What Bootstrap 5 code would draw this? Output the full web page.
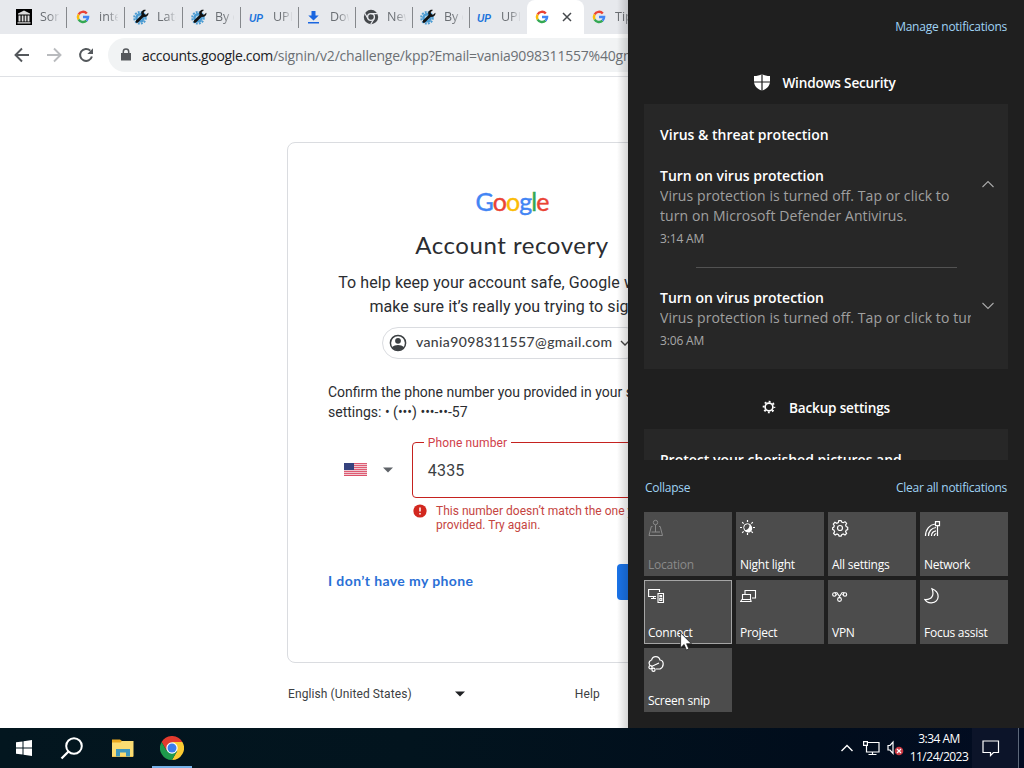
<!DOCTYPE html>
<html lang="en">
<head>
<meta charset="utf-8">
<meta name="viewport" content="width=device-width, initial-scale=1">
<title>Account recovery</title>
<link href="https://cdn.jsdelivr.net/npm/bootstrap@5.3.0/dist/css/bootstrap.min.css" rel="stylesheet">
<style>
body{width:1024px;height:768px;font-family:"Open Sans","Noto Sans",sans-serif;font-size:14px;color:#2b2d31;background:#fff}
svg{display:block;flex:none}
.desk{height:728px}
.browser{width:628px}
.page-w{width:1024px}
.edge-shade{top:0;right:0;bottom:0;width:11px;background:linear-gradient(90deg,rgba(0,0,0,0),rgba(0,0,0,.16))}
.tabstrip{height:34px;background:#e7e9ed;padding-left:9px}
.tab{width:57px;height:34px;padding-left:8px;gap:8px;font-size:12.5px;color:#6a6e73;border-right:1px solid #85888c;border-image:linear-gradient(transparent 8px,#85888c 8px,#85888c 27px,transparent 27px) 1}
.tab:nth-child(-n+5){width:58px}
.tab:first-child{padding-left:7px}
.tab:nth-child(n+6){padding-left:7px}
.tab span{width:19px;overflow:hidden;white-space:nowrap;-webkit-mask-image:linear-gradient(90deg,#000 45%,transparent 105%);mask-image:linear-gradient(90deg,#000 45%,transparent 105%)}
.tab.noline{border-color:transparent;border-image:none}
.tab.current{background:#fff;border-radius:8px 8px 0 0;border:0;gap:12px}
.toolbar{height:43px;border-bottom:1px solid #dfe1e5}
.omni{height:34px;margin-left:14px;border-radius:17px;background:#f1f3f4;padding-left:12px;font-size:14px;width:880px;color:#6c7074;letter-spacing:-.2px}
.omni b{font-weight:400;color:#202124;letter-spacing:-.34px}
.rb{font-family:Roboto,sans-serif}
.gs{font-family:Lato,sans-serif}
.signin{width:450px;height:521px;margin-top:65px;border:1px solid #dadce0;border-radius:8px;padding:43px 40px 0}
.logo{font-size:25px;line-height:30px;letter-spacing:-.95px;-webkit-text-stroke:.4px}
.logo span:nth-child(1),.logo span:nth-child(4){color:#4285f4;-webkit-text-stroke-color:#4285f4}
.logo span:nth-child(2),.logo span:nth-child(6){color:#ea4335;-webkit-text-stroke-color:#ea4335}
.logo span:nth-child(3){color:#fbbc05;-webkit-text-stroke-color:#fbbc05}
.logo span:nth-child(5){color:#34a853;-webkit-text-stroke-color:#34a853}
.headline{font-size:24px;line-height:32px;margin-top:13px;letter-spacing:.55px}
.lede{font-size:16px;line-height:24px;margin-top:10px;letter-spacing:.08px}
.chip{height:32px;width:260px;border:1px solid #dadce0;border-radius:16px;padding-left:6px;gap:9px;margin:8px 0 0 54px;font-weight:500;font-size:14px;letter-spacing:.37px;color:#3c4043}
.chip span{margin-top:-3px}
.chip span+svg{margin-left:-2px}
.confirm{font-size:14px;line-height:20px;margin-top:23px}
.country{width:84px;padding-left:16px;gap:16px;height:56px}
.phone{width:285px;height:56px;border:1px solid #c5221f;border-radius:4px;padding:1px 0 0 15px;font-size:16px;color:#3c4043;letter-spacing:.2px}
.phone label{top:-8px;left:11px;background:#fff;padding:0 4px;font-size:12px;line-height:16px;color:#d0404a;letter-spacing:.13px}
.err{font-size:12px;line-height:14px;color:#c5453f;margin:6px 0 0 85px;gap:9px;letter-spacing:.02px}
.act{margin-top:32px}
.act a{color:#2a6fd6;font-weight:700;font-size:14px;letter-spacing:.4px;margin-top:-4px}
.act .btn{width:79px;height:36px;background:#1a73e8;border-radius:4px}
.foot{width:450px;padding-left:1px;margin-top:22px;font-size:12px;line-height:18px;color:#3c4043;letter-spacing:.1px}
.panel{width:396px;background:#1f1f1f;color:#fff;padding:0 16px;font-size:12px}
.panel a{color:#9fd3f5;letter-spacing:-.25px;position:relative}
.feed{height:460px;overflow:hidden}
.ttl{font-weight:600}
.hd{font-size:13.6px;line-height:20px;gap:12px;letter-spacing:-.2px}
.note{background:#272727;padding:21px 16px 0}
.t15{font-size:14px;line-height:20px;letter-spacing:0}
.dim{color:#a0a0a0;white-space:nowrap;overflow:hidden;width:311px;letter-spacing:.09px}
.stamp{font-size:12px;line-height:16px;color:#a8a8a8;margin-top:5px;letter-spacing:-.15px}
.rule{height:1px;background:#525252;margin:21px 35px 0 36px}
.tiles{display:grid;grid-template-columns:repeat(4,88px);grid-auto-rows:64px;gap:4px}
.tile{background:#4c4c4c;padding:6px 4px 2px;font-size:12px;line-height:18px;letter-spacing:-.25px;display:flex;flex-direction:column;justify-content:space-between;white-space:nowrap}
.tile.off{color:#8a8a8a}
.tile.hot{box-shadow:inset 0 0 0 1px #a5a5a5}
.pointer{left:680px;top:632px}
.taskbar{height:40px;background:linear-gradient(90deg,#03161f,#02141e 40%,#010d1c 80%,#020c22);color:#fff}
.running{width:40px;height:40px;border-bottom:2px solid #76b1e8;padding-top:2px}
.clock{font-size:12px;line-height:18px;width:60px;letter-spacing:-.5px;white-space:nowrap}
.center{width:46px;height:40px;background:#0c1429;margin-left:3px;padding-left:10px}
.peek{width:6px;height:40px;border-left:1px solid #5d6879}
</style>
</head>
<body class="overflow-hidden position-relative">
<svg width="0" height="0" class="position-absolute">
  <defs>
    <symbol id="g" viewBox="0 0 16 16"><g fill="none" stroke-width="2.500"><path d="M3.600 5.500A5.050 5.050 0 0 1 11.800 4.500" stroke="#ea4335"/><path d="M3.600 10.500a5.050 5.050 0 0 1 0-5" stroke="#fbbc05"/><path d="M11.500 11.600a5.050 5.050 0 0 1-7.900-1.100" stroke="#34a853"/><path d="M8 8h5.050a5.050 5.050 0 0 1-1.550 3.600" stroke="#4285f4"/></g></symbol>
    <symbol id="gear" viewBox="0 0 16 16"><circle cx="7" cy="8.800" r="4.800" fill="#4b9bd2"/><circle cx="7" cy="8.800" r="5.800" fill="none" stroke="#4b9bd2" stroke-width="2" stroke-dasharray="1.900 1.140"/><circle cx="7" cy="8.800" r="2.400" fill="#a8cfe8"/><path d="M4 12.600 10.300 6.300" stroke="#111" stroke-width="2.800" stroke-linecap="round"/><path d="M10 1.200c-2 1-2.400 3.500-1 5.300s4.200 1.900 5.700 0c.8-1 .9-2 .6-2.800l-2.300 2-2-.7-.2-2 2.200-2c-1-.4-2.100-.3-3 .2z" fill="#111"/></symbol>
    <symbol id="up" viewBox="0 0 16 16"><text x="0" y="12.500" font-family="Liberation Sans" font-weight="700" font-style="italic" font-size="11.500" textLength="14" lengthAdjust="spacingAndGlyphs" fill="#1b74dc">UP</text></symbol>
  </defs>
</svg>

<div class="desk d-flex">
  <main class="browser position-relative overflow-hidden">
    <div class="page-w">
      <div class="tabstrip d-flex">
        <div class="tab d-flex align-items-center"><svg width="16" height="16"><path fill="#000" d="M0 0h16v16H0z"/><path d="M2 4.500 8 1.500l6 3v1H2zM2.500 6.500h2v6h-2zM5.700 6.500h1.800v6H5.700zM8.600 6.500h1.800v6H8.600zM11.500 6.500h2v6h-2zM1.500 13.200h13v1.300h-13z" fill="#ddd"/></svg><span>Som</span></div>
        <div class="tab d-flex align-items-center"><svg width="16" height="16"><use href="#g"/></svg><span>inter</span></div>
        <div class="tab d-flex align-items-center"><svg width="16" height="16"><use href="#gear"/></svg><span>Late</span></div>
        <div class="tab d-flex align-items-center"><svg width="16" height="16"><use href="#gear"/></svg><span>By c</span></div>
        <div class="tab d-flex align-items-center"><svg width="16" height="16"><use href="#up"/></svg><span>UPL</span></div>
        <div class="tab d-flex align-items-center"><svg width="16" height="16"><path d="M5.500 2h4v4.500h3.200L7.500 11.500 2.300 6.500h3.200zM2 13h11v1.600H2z" fill="#1a66e0"/></svg><span>Dow</span></div>
        <div class="tab d-flex align-items-center"><svg width="16" height="16"><circle cx="8" cy="8" r="7.200" fill="#45484c"/><circle cx="8" cy="8" r="3.400" fill="#45484c" stroke="#e7e9ed" stroke-width="1.400"/><path d="M8 4.600h6.500M5 9.700 1.800 4.200M11 9.700l-3.200 5.400" stroke="#e7e9ed" stroke-width="1.200"/></svg><span>New</span></div>
        <div class="tab d-flex align-items-center"><svg width="16" height="16"><use href="#gear"/></svg><span>By c</span></div>
        <div class="tab noline d-flex align-items-center"><svg width="16" height="16"><use href="#up"/></svg><span>UPL</span></div>
        <div class="tab current d-flex align-items-center"><svg width="16" height="16"><use href="#g"/></svg><svg width="10" height="10" stroke="#45484c" stroke-width="1.500"><path d="m1 1 8 8M9 1 1 9"/></svg></div>
        <div class="tab noline d-flex align-items-center"><svg width="16" height="16"><use href="#g"/></svg><span>Tips</span></div>
      </div>
      <div class="toolbar d-flex align-items-center">
        <svg width="94" height="42" fill="none" stroke-width="1.900"><path d="M29 21H16M22 14.500 15.500 21l6.500 6.500" stroke="#54585c"/><path d="M47 21h13M54 14.500 60.500 21 54 27.500" stroke="#b9bbbe"/><path d="M90.300 16.600A6 6 0 1 0 91.900 22.500" stroke="#54585c" stroke-width="2"/><path d="M93 14.300v5.700h-5.700z" fill="#54585c"/></svg>
        <div class="omni d-flex align-items-center"><svg width="12" height="14" style="margin-right:10px"><path d="M1 5h10v7.500H1z" fill="#55585c"/><path d="M3.300 5.500V3.800a2.700 2.700 0 0 1 5.400 0v1.700" fill="none" stroke="#55585c" stroke-width="1.500"/></svg><div class="text-nowrap url"><b>accounts.google.com</b>/signin/v2/challenge/kpp?Email=vania9098311557%40gmail.com</div></div>
      </div>
      <section class="signin mx-auto">
        <div class="logo gs text-center"><span>G</span><span>o</span><span>o</span><span>g</span><span>l</span><span>e</span></div>
        <h1 class="headline gs text-center mb-0 fw-normal">Account recovery</h1>
        <p class="lede rb text-center mb-0">To help keep your account safe, Google wants to make sure it’s really you trying to sign in</p>
        <div class="chip gs d-flex align-items-center"><svg width="18" height="18"><circle cx="9" cy="9" r="7.600" fill="#fff" stroke="#3c4043" stroke-width="1.500"/><circle cx="9" cy="6.800" r="2.900" fill="#3c4043"/><path d="M3 13.300c3-3.200 9-3.200 12 0-2.600 4-9.400 4-12 0z" fill="#3c4043"/></svg><span>vania9098311557@gmail.com</span><svg width="10" height="8"><path d="m1 2 4 4 4-4" fill="none" stroke="#444" stroke-width="1.400"/></svg></div>
        <p class="confirm rb mb-0">Confirm the phone number you provided in your security settings: • (•••) •••-••-57</p>
        <div class="d-flex rb" style="margin-top:20px">
          <div class="country d-flex align-items-center"><svg width="23" height="13" style="margin-top:-1px"><path fill="#f2d6dc" d="M0 0h23v13H0z"/><path d="M0 .6h23M0 2.600h23M0 4.600h23M0 6.600h23M0 8.600h23M0 10.600h23M0 12.500h23" stroke="#dc5068" stroke-width="1"/><path fill="#35427e" d="M0 0h10v7H0z"/></svg><svg width="10" height="6"><path d="M0 .5h10l-5 5z" fill="#5f6368"/></svg></div>
          <div class="phone position-relative d-flex align-items-center"><label class="position-absolute">Phone number</label>4335</div>
        </div>
        <div class="err rb d-flex"><svg width="14" height="14"><circle cx="7" cy="7" r="6.600" fill="#d2281f"/><path d="M7 3.400v4.200M7 9v1.600" stroke="#fff" stroke-width="1.500"/></svg><span>This number doesn’t match the one you<br>provided. Try again.</span></div>
        <div class="act gs d-flex justify-content-between align-items-center"><a class="text-decoration-none">I don’t have my phone</a><button class="btn border-0" aria-label="Continue"></button></div>
      </section>
      <footer class="foot rb mx-auto d-flex align-items-center"><span>English (United States)</span><svg width="10" height="6" style="margin-left:43px"><path d="M0 .5h10l-5 5z" fill="#202124"/></svg><span style="margin-left:110px">Help</span></footer>
    </div>
    <div class="edge-shade position-absolute"></div>
  </main>

  <aside class="panel">
    <div class="feed">
      <div class="text-end" style="padding:18px 1px 0 0;line-height:18px"><a class="text-decoration-none mng">Manage notifications</a></div>
      <div class="hd ttl d-flex justify-content-center align-items-center" style="padding:37px 2px 11px 0"><svg width="16" height="17" style="margin-top:-2px"><path d="M8 0c2.300 1.600 5 2 8 2v5.500c0 4.500-3.500 7.500-8 9.200-4.500-1.700-8-4.700-8-9.200V2c3 0 5.700-.4 8-2z" fill="#fff"/><path d="M8 0v17M0 8h16" stroke="#1f1f1f" stroke-width="1.200"/></svg>Windows Security</div>
      <div class="note" style="height:265px">
        <div class="t15 ttl">Virus &amp; threat protection</div>
        <div class="d-flex justify-content-between align-items-center" style="margin-top:21px;height:80px">
          <div><div class="t15 ttl">Turn on virus protection</div><div class="t15 dim">Virus protection is turned off. Tap or click to<br>turn on Microsoft Defender Antivirus.</div><div class="stamp">3:14 AM</div></div>
          <svg width="12" height="8" style="margin:0 -2px 44px 0"><path d="m.5 7 5.500-5.500L11.500 7" fill="none" stroke="#aaa" stroke-width="1.100"/></svg>
        </div>
        <div class="rule"></div>
        <div class="d-flex justify-content-between align-items-center" style="margin-top:20px;height:61px">
          <div><div class="t15 ttl">Turn on virus protection</div><div class="t15 dim">Virus protection is turned off. Tap or click to turn on</div><div class="stamp">3:06 AM</div></div>
          <svg width="12" height="8" style="margin:0 -2px 25px 0"><path d="m.5 1 5.500 5.500L11.500 1" fill="none" stroke="#aaa" stroke-width="1.100"/></svg>
        </div>
      </div>
      <div class="hd ttl d-flex justify-content-center align-items-center" style="padding:29px 0 11px;gap:13px"><svg width="14" height="14" style="margin-top:-2px"><circle cx="7" cy="7" r="3.900" fill="none" stroke="#fff" stroke-width="1.700"/><circle cx="7" cy="7" r="5.400" fill="none" stroke="#fff" stroke-width="1.800" stroke-dasharray="1.900 2.341" stroke-dashoffset="1"/></svg>Backup settings</div>
      <div class="note"><div class="t15 ttl">Protect your cherished pictures and</div></div>
    </div>
    <div class="d-flex justify-content-between" style="padding:18px 1px 15px;line-height:19px"><a class="text-decoration-none">Collapse</a><a class="text-decoration-none">Clear all notifications</a></div>
    <div class="tiles">
      <div class="tile off"><svg width="17" height="20" fill="none" stroke="currentColor"><circle cx="7.500" cy="4.500" r="2.200"/><path d="M7.500 7v7M4.500 8.500H3.300L1 17.500h13.500l-2.300-9H11M3.500 14h8.500"/></svg>Location</div>
      <div class="tile"><svg width="17" height="20" fill="none" stroke="currentColor"><circle cx="7.500" cy="9.500" r="3.800"/><path d="M11.300 8A4 4 0 1 1 4.500 12c2.500.3 5.500-1.500 4.800-6z" fill="#fff" stroke="none"/><path d="M7.500 2v2M7.500 15v2M0 9.500h2M13 9.500h2M2.200 4.200l1.400 1.400M11.400 13.400l1.400 1.400M12.800 4.200l-1.400 1.400M3.600 13.400l-1.400 1.400" stroke-width="1.200"/></svg>Night light</div>
      <div class="tile"><svg width="17" height="20" fill="none" stroke="currentColor" stroke-width="1.200"><circle cx="8" cy="10" r="2.500"/><path d="m6.800 2.600-.5 2-1.500.7-1.900-1-1.600 1.700 1 1.800-.6 1.500-1.200.7v1.400l1.500.7.6 1.500-1 1.800 1.600 1.600 1.800-1 1.500.7.600 1.500h2l.6-1.500 1.500-.7 1.800 1 1.600-1.600-1-1.800.6-1.500 1.500-.6V9.300l-1.500-.7-.6-1.500 1-1.800-1.600-1.600-1.800 1-1.500-.7-.6-1.500z"/></svg>All settings</div>
      <div class="tile"><svg width="17" height="20" fill="none" stroke="currentColor" stroke-width="1.200"><path d="M1.500 18C1.500 11 6 6.500 11 6M4.500 18c0-4.500 3-8 7.500-8.500M7.500 18c0-2.500 1.800-4.800 4.500-5.200M10.200 18c0-1.300.8-2.200 2-2.500M13.500 8v10M11.500 3.600h4v4h-4z"/></svg>Network</div>
      <div class="tile hot"><svg width="17" height="20" fill="none" stroke="currentColor" stroke-width="1.100"><path d="M8 10.500H.6V3.500h10.900V6M3 12.500h5M5.500 10.500v2M10 7.500h5.500v9H10z"/><path d="M12 9.500h1.600v1.300H12zM11.800 12.500h2v2h-2z"/></svg>Connect</div>
      <div class="tile"><svg width="17" height="20" fill="none" stroke="currentColor" stroke-width="1.100"><path d="M5 8V4.500h10.500v7.500H12M2.500 8.500h8v5h-8zM.6 15.500h10.500l-.5-2H2z"/></svg>Project</div>
      <div class="tile"><svg width="17" height="20" fill="none" stroke="currentColor" stroke-width="1.100"><circle cx="2.300" cy="8.500" r="1.700"/><circle cx="13" cy="8.500" r="1.700"/><circle cx="7.500" cy="13.500" r="1.900"/><path d="M2.500 6.700H5l3.300 4.900M4 8.700h1.200M12.500 6.700H10L6.800 11.600M11.300 8.700h-1.200"/></svg>VPN</div>
      <div class="tile"><svg width="17" height="20" fill="none" stroke="currentColor" stroke-width="1.200"><path d="M8 2.800c8.500 3.500 8 13-.5 14-3 .2-5.300-1-6.700-3.300C8 14 10.500 9 8 2.800z"/></svg>Focus assist</div>
      <div class="tile"><svg width="17" height="20" fill="none" stroke="currentColor" stroke-width="1.200"><path d="M2 11.500C-.5 8 3 6 3.600 6 4.500 1.500 11 1.500 12 6c4 .5 4.500 6.500 0 9H8M3.500 12.500 11 9"/><circle cx="2.500" cy="13.300" r="1.600"/><circle cx="5.500" cy="15.800" r="1.600"/></svg>Screen snip</div>
    </div>
  </aside>
</div>

<footer class="taskbar d-flex align-items-center">
  <svg width="17" height="16" style="margin-left:16px"><path d="M0 2.300 6.500 1.400v6.100H0zM7.500 1.200 16 0v7.500H7.500zM0 8.500h6.500v6.100L0 13.700zM7.500 8.500H16V16l-8.500-1.200z" fill="#fff"/></svg>
  <svg width="24" height="24" style="margin-left:27px" fill="none" stroke="#fff"><circle cx="14" cy="10" r="7.800" stroke-width="2"/><path d="m8.500 15.500-7 7" stroke-width="2.300"/></svg>
  <svg width="22" height="20" style="margin-left:28px"><path d="M0 1.500h8L10 3h11v16H0z" fill="#e9a820"/><path d="M0 4.500h8.500L10 3h11.500v15.500H0z" fill="#fbdc72"/><path d="M4 18.500V11h14v7.500h-4V14.500H8v4z" fill="#3f97bd"/></svg>
  <div class="running d-flex justify-content-center align-items-center" style="margin-left:18px"><svg width="24" height="24" viewBox="-12 -12 24 24"><path d="M-10.400-6A12 12 0 0 1 10.400-6H0l-5.200 9z" fill="#e33b2e"/><path d="M10.400-6A12 12 0 0 1 0 12L5.200 3 0-6z" fill="#fccb32"/><path d="M0 12A12 12 0 0 1-10.400-6L-5.200 3H5.200z" fill="#1e9a4c"/><circle r="5.700" fill="#fff"/><circle r="4.500" fill="#3b7ded"/></svg></div>
  <div class="ms-auto d-flex align-items-center">
    <svg width="14" height="10"><path d="m1.500 8 5.500-5.500L12.500 8" fill="none" stroke="#fff" stroke-width="1.400"/></svg>
    <svg width="18" height="18" style="margin-left:9px" fill="none" stroke="#fff" stroke-width="1.200"><path d="M4.500 3.500H16v9.500H3.500V6.500M9.500 13v2.500M5.500 15.500h8M.6 2.600h3.800v3.800H.6z"/></svg>
    <svg width="18" height="16" style="margin-left:6px"><path d="M1 5.500h2L6 2v11.500L3 10H1z" fill="none" stroke="#fff" stroke-width="1.200"/><circle cx="12" cy="11" r="4.300" fill="#c93842"/><path d="m10 9 4 4m0-4-4 4" stroke="#fff" stroke-width="1.200"/></svg>
    <div class="clock d-flex flex-column align-items-center" style="margin-left:4px"><span>3:34 AM</span><span>11/24/2023</span></div>
    <div class="center d-flex align-items-center"><svg width="18" height="18"><path d="M1 2h15.500v11.500h-5l-3 3v-3H1z" fill="none" stroke="#fff" stroke-width="1.200"/></svg></div>
    <div class="peek"></div>
  </div>
</footer>
<svg class="pointer position-absolute" width="12" height="19"><path d="M.6.800v15l3.500-3.300 2.300 5.500 2.500-1-2.300-5.300h4.800z" fill="#fff" stroke="#222" stroke-width=".8"/></svg>
<script src="https://cdn.jsdelivr.net/npm/bootstrap@5.3.0/dist/js/bootstrap.bundle.min.js"></script>
</body>
</html>
